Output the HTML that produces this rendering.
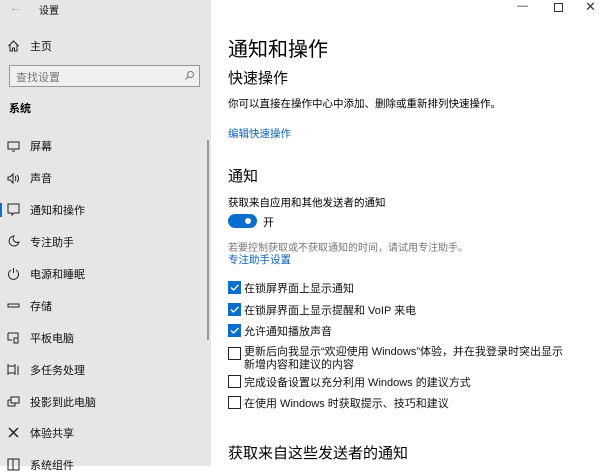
<!DOCTYPE html><html><head><meta charset="utf-8"><style>
*{margin:0;padding:0;box-sizing:border-box}
body{width:600px;height:466px;overflow:hidden;background:#fff;font-family:"Liberation Sans","Noto Sans CJK SC",sans-serif;color:#000;position:relative}
.a{position:absolute;white-space:nowrap}
#side{position:absolute;left:0;top:0;width:211px;height:466px;background:#e6e6e6}
.si{font-size:11px;color:#111}
.ic{position:absolute;left:7px;width:13px;height:13px}
.cb{position:absolute;left:228px;width:13px;height:13px}
.on{background:#0a6ed1}
.off{border:1.5px solid #222;background:#fff}
.t{font-size:11px;left:244px;color:#111}
</style></head><body>
<div id="side">
<div class="a" style="left:10px;top:2px;font-size:11px;color:#999">←</div>
<div class="a si" style="left:39px;top:2px;font-size:10px">设置</div>
<svg class="ic" style="top:39px" viewBox="0 0 13 13"><path d="M1.5 7 6.5 2 11.5 7M3 6v6h2.5V9h2v3H10V6" fill="none" stroke="#222"/></svg>
<div class="a si" style="left:30px;top:38px">主页</div>
<div class="a" style="left:9px;top:65px;width:191px;height:22px;border:1px solid #999;background:#f0f0f0"></div>
<div class="a" style="left:16px;top:69px;font-size:11px;color:#777">查找设置</div>
<svg class="a" style="left:184px;top:70px" width="11" height="11" viewBox="0 0 11 11"><circle cx="6.5" cy="4.5" r="3" fill="none" stroke="#777"/><path d="M4.5 6.5 1.5 9.5" stroke="#777"/></svg>
<div class="a" style="left:9px;top:100px;font-size:11px;font-weight:bold">系统</div>
<div class="a" style="left:207px;top:140px;width:2px;height:200px;background:#999"></div>
<div class="a" style="left:0;top:203px;width:2px;height:14px;background:#0a6ed1"></div>
<svg class="ic" style="top:140px" viewBox="0 0 13 13"><path d="M1 2h11v7H1zM5 11h3" fill="none" stroke="#222"/></svg><div class="a si" style="left:30px;top:138px">屏幕</div>
<svg class="ic" style="top:172px" viewBox="0 0 13 13"><path d="M1 5h2l3-3v9L3 8H1zM8 4c1 1 1 4 0 5M10 3c2 2 2 5 0 7" fill="none" stroke="#222"/></svg><div class="a si" style="left:30px;top:170px">声音</div>
<svg class="ic" style="top:203px" viewBox="0 0 13 13"><path d="M1 1h11v9H7l-2 2V10H1z" fill="none" stroke="#222"/></svg><div class="a si" style="left:30px;top:202px">通知和操作</div>
<svg class="ic" style="top:235px" viewBox="0 0 13 13"><path d="M7 1a5 5 0 1 0 5 6A4 4 0 0 1 7 1z" fill="none" stroke="#222"/></svg><div class="a si" style="left:30px;top:234px">专注助手</div>
<svg class="ic" style="top:267px" viewBox="0 0 13 13"><path d="M4 3a5 5 0 1 0 5 0M6.5 1v5" fill="none" stroke="#222"/></svg><div class="a si" style="left:30px;top:266px">电源和睡眠</div>
<svg class="ic" style="top:299px" viewBox="0 0 13 13"><path d="M1 5h11v3H1z" fill="none" stroke="#222"/></svg><div class="a si" style="left:30px;top:298px">存储</div>
<svg class="ic" style="top:331px" viewBox="0 0 13 13"><path d="M1 2h10v6M1 2v7h4M7 7h4v5H7z" fill="none" stroke="#222"/></svg><div class="a si" style="left:30px;top:330px">平板电脑</div>
<svg class="ic" style="top:363px" viewBox="0 0 13 13"><path d="M1 1v11M1 3h7v7H1M8 1v11M11 3v9" fill="none" stroke="#222"/></svg><div class="a si" style="left:30px;top:362px">多任务处理</div>
<svg class="ic" style="top:395px" viewBox="0 0 13 13"><path d="M4 2h8v6H4zM1 5h3M1 5v6h7V8" fill="none" stroke="#222"/></svg><div class="a si" style="left:30px;top:394px">投影到此电脑</div>
<svg class="ic" style="top:426px" viewBox="0 0 13 13"><path d="M2 2l9 9M11 2l-9 9" fill="none" stroke="#222" stroke-width="1.5"/></svg><div class="a si" style="left:30px;top:425px">体验共享</div>
<svg class="ic" style="top:458px" viewBox="0 0 13 13"><path d="M1 1h11v11H1zM6 1v11" fill="none" stroke="#222"/></svg><div class="a si" style="left:30px;top:457px">系统组件</div>
</div>
<div class="a" style="left:517px;top:0;font-size:11px;color:#333">—</div>
<div class="a" style="left:554px;top:3px;width:9px;height:9px;border:1px solid #333"></div>
<div class="a" style="left:585px;top:-1px;font-size:13px;color:#333">✕</div>
<div class="a" style="left:228px;top:33px;font-size:20px">通知和操作</div>
<div class="a" style="left:228px;top:67px;font-size:15px">快速操作</div>
<div class="a" style="left:228px;top:96px;font-size:10.5px">你可以直接在操作中心中添加、删除或重新排列快速操作。</div>
<div class="a" style="left:228px;top:126px;font-size:10.5px;color:#0a64c0">编辑快速操作</div>
<div class="a" style="left:228px;top:165px;font-size:15px">通知</div>
<div class="a" style="left:228px;top:195px;font-size:10.5px">获取来自应用和其他发送者的通知</div>
<div class="a" style="left:228px;top:214px;width:29px;height:14px;border-radius:7px;background:#0a6ed1"></div>
<div class="a" style="left:245px;top:218px;width:6px;height:6px;border-radius:50%;background:#fff"></div>
<div class="a" style="left:263px;top:214px;font-size:11px">开</div>
<div class="a" style="left:228px;top:239px;font-size:10px;color:#777">若要控制获取或不获取通知的时间，请试用专注助手。</div>
<div class="a" style="left:228px;top:252px;font-size:10.5px;color:#0a64c0">专注助手设置</div>
<div class="cb on" style="top:281px"></div><svg class="a" style="left:228px;top:281px" width="13" height="13"><path d="M3 6.5l2.5 2.5 5-5" fill="none" stroke="#fff" stroke-width="1.3"/></svg><div class="a t" style="top:280px">在锁屏界面上显示通知</div>
<div class="cb on" style="top:303px"></div><svg class="a" style="left:228px;top:303px" width="13" height="13"><path d="M3 6.5l2.5 2.5 5-5" fill="none" stroke="#fff" stroke-width="1.3"/></svg><div class="a t" style="top:302px">在锁屏界面上显示提醒和 VoIP 来电</div>
<div class="cb on" style="top:324px"></div><svg class="a" style="left:228px;top:324px" width="13" height="13"><path d="M3 6.5l2.5 2.5 5-5" fill="none" stroke="#fff" stroke-width="1.3"/></svg><div class="a t" style="top:323px">允许通知播放声音</div>
<div class="cb off" style="top:347px"></div><div class="a t" style="top:346px;line-height:13px">更新后向我显示“欢迎使用 Windows”体验，并在我登录时突出显示<br>新增内容和建议的内容</div>
<div class="cb off" style="top:375px"></div><div class="a t" style="top:374px">完成设备设置以充分利用 Windows 的建议方式</div>
<div class="cb off" style="top:396px"></div><div class="a t" style="top:395px">在使用 Windows 时获取提示、技巧和建议</div>
<div class="a" style="left:228px;top:442px;font-size:15px">获取来自这些发送者的通知</div>
</body></html>
